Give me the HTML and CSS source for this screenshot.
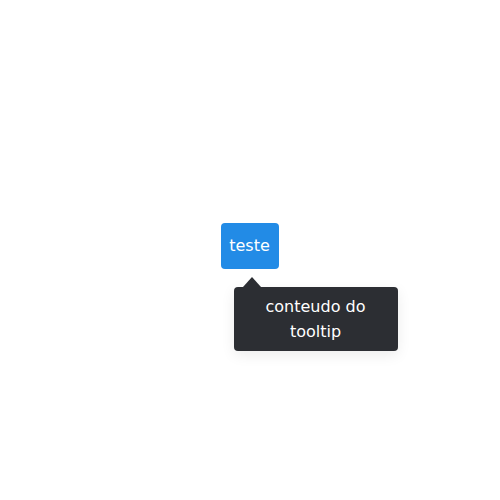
FILE: index.html
```html
<!DOCTYPE html>
<html>
<head>
<meta charset="utf-8">
<link rel="stylesheet" href="styles.css">
</head>
<body>
<div class="stage">
  <div class="anchor">
    <button class="btn">teste</button>
    <div class="tooltip">
      <span class="arrow"></span>
      conteudo do tooltip
    </div>
  </div>
</div>
</body>
</html>
```
FILE: styles.css
```css
html, body {
  margin: 0;
  padding: 0;
  background: #fff;
  font-family: "DejaVu Sans", sans-serif;
}
.stage {
  height: 500px;
  display: flex;
  justify-content: center;
  padding-top: 223px;
  box-sizing: border-box;
}
.anchor {
  position: relative;
  height: 46px;
}
.btn {
  display: block;
  width: 58px;
  height: 46px;
  margin: 0 1px 0 0;
  padding: 0;
  border: none;
  border-radius: 4px;
  background: #228be6;
  color: #fff;
  font-family: "DejaVu Sans", sans-serif;
  font-size: 16px;
  line-height: 46px;
}
.tooltip {
  position: absolute;
  left: 13px;
  top: 64px;
  width: 164px;
  box-sizing: border-box;
  padding: 7px 12px;
  background: #2c2e33;
  color: #fff;
  border-radius: 4px;
  font-size: 16px;
  line-height: 25px;
  text-align: center;
  box-shadow: 0 4px 14px rgba(0, 0, 0, 0.08);
}
.arrow {
  position: absolute;
  left: 9px;
  top: -10px;
  width: 0;
  height: 0;
  border-left: 9px solid transparent;
  border-right: 9px solid transparent;
  border-bottom: 10px solid #2c2e33;
}
```
